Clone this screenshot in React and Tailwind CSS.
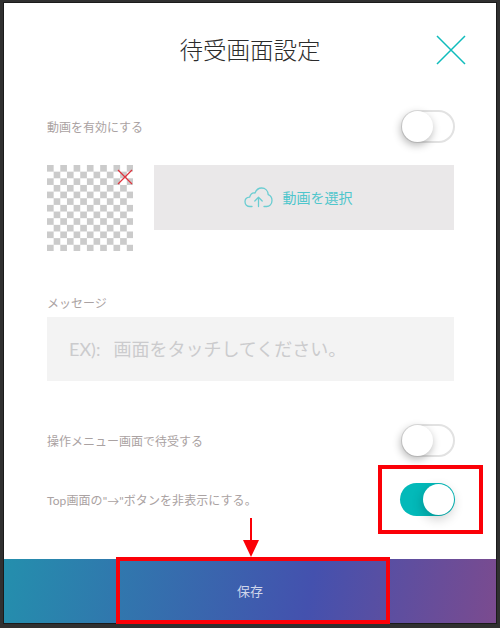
import React from "react";

const Toggle = ({ on }) => (
  <div
    className={
      on
        ? "relative w-[55px] h-[33px] rounded-full bg-[#03b9b9]"
        : "relative w-[54px] h-[33px] rounded-full bg-white border-2 border-[#e2e2e2]"
    }
  >
    <div
      className={
        on
          ? "absolute right-[1px] top-[1px] w-[31px] h-[31px] rounded-full bg-white shadow-[-1px_4px_12px_rgba(0,0,0,0.2)]"
          : "absolute -left-[1px] -top-[1px] w-[31px] h-[31px] rounded-full bg-white shadow-[-1px_3px_9px_rgba(0,0,0,0.3)]"
      }
    ></div>
  </div>
);

const Row = ({ label, on, className }) => (
  <div className={"flex items-center justify-between pl-[43px] pr-[41px] " + className}>
    <span className="pt-[2px] text-[12px] leading-[18px] text-[#aaa2a2]">{label}</span>
    <Toggle on={on} />
  </div>
);

const App = () => {
  return (
    <div className="relative w-[500px] h-[628px] overflow-hidden bg-[#303030] pt-[3px] px-[4px] pb-[5px] font-['Lato','Noto_Sans_CJK_JP',sans-serif]">
      <div className="flex flex-col h-full bg-white shadow-[0_0_0_1px_#1b1b1b]">
        {/* header */}
        <div className="relative flex items-center justify-center h-[98px] shrink-0">
          <h1 className="text-[23.5px] font-light text-[#2b2b2b] leading-[32px] -mt-[4px]">待受画面設定</h1>
          <svg className="absolute left-[432px] top-[32px]" width="30" height="30" viewBox="0 0 30 30" fill="none" stroke="#0fbcbc" strokeWidth="1.5">
            <path d="M1 1 L29 29 M29 1 L1 29" />
          </svg>
        </div>

        <Row label="動画を有効にする" className="h-[33px] mt-[9px]" />

        {/* video select */}
        <div className="flex pl-[43px] pr-[42px] mt-[22px] gap-[21px]">
          <div className="relative w-[86px] h-[86px] shrink-0 bg-[repeating-conic-gradient(#ffffff_0_25%,#cbcbcb_0_50%)] bg-[length:13.3px_13.3px]">
            <svg className="absolute right-0 top-[4px]" width="16" height="16" viewBox="0 0 16 16" fill="none" stroke="#e0323c" strokeWidth="1.2">
              <path d="M1 1 L15 15 M15 1 L1 15" />
            </svg>
          </div>
          <div className="flex-1 h-[65px] flex items-center justify-center gap-[10px] pr-[12px] bg-[#eae8e9] text-[#4fc6cc] text-[14px]">
            <svg width="29" height="21" viewBox="0 0 29 21" fill="none" stroke="#6bcdd2" strokeWidth="1.3" strokeLinecap="round" strokeLinejoin="round">
              <path d="M8 19.5 H6 C3 19.5 1 17.5 1 14.8 C1 12.2 3 10.4 5.6 10.2 C6.6 6.8 8.8 5.6 11 6 C12.2 3 14.6 1 17.6 1 C21.4 1 24 3.8 24.2 7.6 C26.6 8.6 28 11 28 13.6 C28 17 25.6 19.5 22.6 19.5 H20" />
              <path d="M14.5 19.5 V10.5 M10.8 14 L14.5 10.3 L18.2 14" />
            </svg>
            <span>動画を選択</span>
          </div>
        </div>

        {/* message */}
        <div className="pl-[43px] pr-[42px] mt-[43px]">
          <div className="pt-[1px] h-[18px] text-[12px] leading-[18px] text-[#aaa2a2]">メッセージ</div>
          <div className="mt-[5px] h-[64px] flex items-center pl-[22px] gap-[13px] bg-[#f3f3f3] text-[18px] text-[#cbcbcd]">
            <span>EX):</span>
            <span>画面をタッチしてください。</span>
          </div>
        </div>

        <Row label="操作メニュー画面で待受する" className="h-[33px] mt-[43px]" />
        <Row
          label={<span className="tracking-[0.08px]">Top画面の&quot;→&quot;ボタンを非表示にする。</span>}
          on
          className="h-[33px] mt-[26px]"
        />

        {/* footer */}
        <div className="mt-auto h-[64px] pt-[2px] flex items-center justify-center text-[13px] text-[#cfd6ea] bg-[linear-gradient(100deg,#248fad_0%,#4451ae_62%,#7b4b8f_100%)]">
          保存
        </div>
      </div>

      {/* annotations */}
      <div className="absolute left-[378px] top-[465px] w-[105px] h-[69px] border-4 border-[#fb0007]"></div>
      <div className="absolute left-[116px] top-[557px] w-[274px] h-[67px] border-4 border-[#fb0007]"></div>
      <svg className="absolute left-[242px] top-[518px]" width="18" height="40" viewBox="0 0 18 40" fill="#fb0007">
        <path d="M8 0 H10 V22 H17 L9 39 L1 22 H8 Z" />
      </svg>
    </div>
  );
};

export default App;
